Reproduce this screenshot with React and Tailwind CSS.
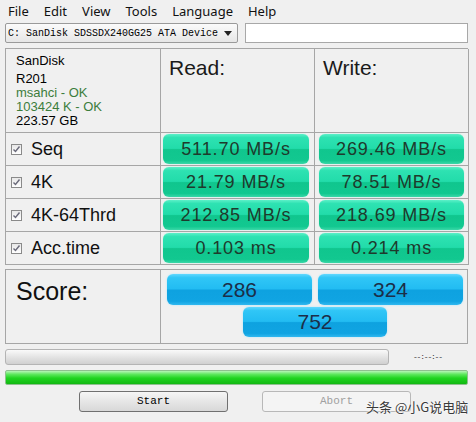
import React from 'react';

const rows = [
  { label: 'Seq', read: '511.70 MB/s', write: '269.46 MB/s' },
  { label: '4K', read: '21.79 MB/s', write: '78.51 MB/s' },
  { label: '4K-64Thrd', read: '212.85 MB/s', write: '218.69 MB/s' },
  { label: 'Acc.time', read: '0.103 ms', write: '0.214 ms' },
];

const menu = ['File', 'Edit', 'View', 'Tools', 'Language', 'Help'];

function Check() {
  return (
    <div className="w-[11px] h-[11px] border border-[#8a8a8a] bg-[linear-gradient(to_bottom,#e8e8e8,#ffffff)] flex items-center justify-center">
      <svg width="9" height="9" viewBox="0 0 9 9">
        <path d="M1.5 4.5 L3.5 6.5 L7.5 1.5" fill="none" stroke="#6a6a7a" strokeWidth="1.4" />
      </svg>
    </div>
  );
}

function GreenBox({ children }) {
  return (
    <div className="h-full rounded-[6px] bg-[linear-gradient(to_bottom,#5cf0c8_0%,#2ee2b2_12%,#22dcaa_48%,#10c68e_52%,#12c890_88%,#3ad8a8_100%)] shadow-[0_0_1px_#7ff0d0] flex items-center justify-center text-[18px] tracking-[0.9px] text-[#1e3a2c] font-['Liberation_Sans',Arial,sans-serif]">
      {children}
    </div>
  );
}

function BlueBox({ children, className = '' }) {
  return (
    <div className={`rounded-[6px] bg-[linear-gradient(to_bottom,#60d8ff_0%,#30c6f6_12%,#22bcf2_48%,#0ea2e0_52%,#10a4e2_88%,#30b8f0_100%)] shadow-[0_0_2px_#9fe4ff] flex items-center justify-center text-[21px] text-[#1c2e48] font-['Liberation_Sans',Arial,sans-serif] ${className}`}>
      {children}
    </div>
  );
}

export default function App() {
  return (
    <div className="relative w-[476px] h-[422px] bg-[#f0f0f0] overflow-hidden font-['Liberation_Sans',Arial,sans-serif] text-black">
      {/* Menu */}
      <div className="h-[23px] flex items-center gap-[15px] pl-[8px] text-[13px] font-['Noto_Sans',sans-serif] text-[#111]">
        {menu.map((m) => (
          <span key={m}>{m}</span>
        ))}
      </div>

      {/* Drive selector */}
      <div className="flex items-center px-[5px] gap-[7px] h-[20px]">
        <div className="w-[233px] h-[20px] border border-[#9a9a9a] rounded-[2px] bg-[linear-gradient(to_bottom,#fbfbfb,#e6e6e6)] flex items-center justify-between pl-[2px] pr-[5px]">
          <span className="text-[10px] font-['Liberation_Mono',monospace] text-black">C: SanDisk SDSSDX240GG25 ATA Device</span>
          <svg width="8" height="5" viewBox="0 0 8 5">
            <path d="M0 0 L8 0 L4 5 Z" fill="#222" />
          </svg>
        </div>
        <div className="w-[223px] h-[20px] border border-[#a8a8a8] bg-white" />
      </div>

      {/* Results table */}
      <div className="ml-[5px] mt-[5px] w-[463px] border-l border-t border-[#a6a6a6]">
        <div className="grid grid-cols-[155px_154px_154px] h-[84px]">
          <div className="border-r border-b border-[#a6a6a6] pl-[10px] pt-[5px] text-[13px] leading-[14px]">
            <div className="mb-[4px]">SanDisk</div>
            <div>R201</div>
            <div className="text-[#3c7d3c]">msahci - OK</div>
            <div className="text-[#3c7d3c]">103424 K - OK</div>
            <div>223.57 GB</div>
          </div>
          <div className="border-r border-b border-[#a6a6a6] pl-[8px] pt-[3px] text-[21px] text-[#1a1a1a]">Read:</div>
          <div className="border-r border-b border-[#a6a6a6] pl-[8px] pt-[3px] text-[21px] text-[#1a1a1a]">Write:</div>
        </div>
        {rows.map((r) => (
          <div key={r.label} className="grid grid-cols-[155px_154px_154px] h-[33px]">
            <div className="border-r border-b border-[#a6a6a6] flex items-center pl-[5px] gap-[9px]">
              <Check />
              <span className="text-[18px] text-[#111]">{r.label}</span>
            </div>
            <div className="border-r border-b border-[#a6a6a6] pl-[2px] pr-[5px] py-[1px]">
              <GreenBox>{r.read}</GreenBox>
            </div>
            <div className="border-r border-b border-[#a6a6a6] pl-[4px] pr-[4px] py-[1px]">
              <GreenBox>{r.write}</GreenBox>
            </div>
          </div>
        ))}
      </div>

      {/* Score */}
      <div className="ml-[5px] mt-[4px] w-[463px] h-[75px] border border-[#a6a6a6] flex">
        <div className="w-[155px] border-r border-[#a6a6a6] pl-[10px] pt-[3px] text-[25px] text-[#111]">Score:</div>
        <div className="flex-1 flex flex-col pt-[4px] pl-[6px] pr-[4px] gap-[2px]">
          <div className="flex gap-[6px]">
            <BlueBox className="w-[145px] h-[31px]">286</BlueBox>
            <BlueBox className="w-[145px] h-[31px]">324</BlueBox>
          </div>
          <div className="flex pl-[76px]">
            <BlueBox className="w-[144px] h-[30px]">752</BlueBox>
          </div>
        </div>
      </div>

      {/* Progress */}
      <div className="flex items-center mt-[5px] px-[5px] h-[16px]">
        <div className="w-[384px] h-[16px] rounded-[3px] border border-[#b4b4b4] bg-[linear-gradient(to_bottom,#fafafa,#e4e4e4_50%,#d0d0d0)]" />
        <span className="ml-[24px] text-[8px] tracking-[-1.2px] text-[#333] font-['Liberation_Mono',monospace]">--:--:--</span>
      </div>
      <div className="ml-[5px] mt-[5px] w-[463px] h-[15px] rounded-[2px] border border-[#8fbf8f] bg-[linear-gradient(to_bottom,#b8f5b8_0%,#5ee85e_25%,#1fd41f_55%,#12b812_100%)]" />

      {/* Buttons */}
      <div className="flex mt-[6px] h-[21px]">
        <div className="ml-[79px] w-[149px] h-[21px] rounded-[3px] border border-[#707070] bg-[linear-gradient(to_bottom,#f6f6f6,#e6e6e6_50%,#d8d8d8)] flex items-center justify-center text-[11px] font-['Liberation_Mono',monospace] text-black">
          Start
        </div>
        <div className="ml-[34px] w-[149px] h-[21px] rounded-[3px] border border-[#b8b8b8] bg-[#f4f4f4] flex items-center justify-center text-[11px] font-['Liberation_Mono',monospace] text-[#a0a0a0]">
          Abort
        </div>
      </div>

      {/* Watermark */}
      <div className="absolute left-[366px] top-[399px] text-[13px] leading-[16px] whitespace-nowrap text-[#3a3a3a] font-['Noto_Sans_CJK_SC',sans-serif] [text-shadow:0_0_2px_#ffffff,0_0_2px_#ffffff]">
        头条 @小G说电脑
      </div>
    </div>
  );
}
